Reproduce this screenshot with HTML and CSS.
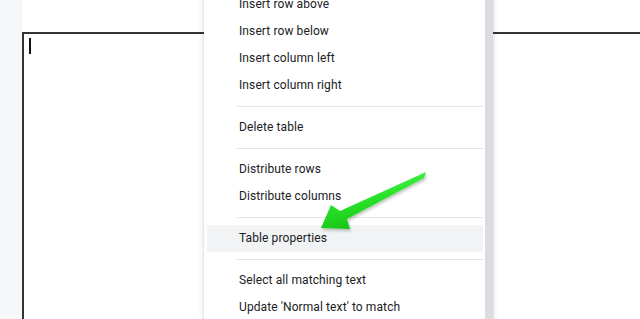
FILE: index.html
```html
<!DOCTYPE html>
<html>
<head>
<meta charset="utf-8">
<link rel="stylesheet" href="styles.css">
</head>
<body>
<div class="app">
  <div class="gutter"></div>
  <div class="page">
    <div class="table">
      <div class="cell"><span class="caret"></span></div>
    </div>
  </div>
</div>

<div class="menu">
  <div class="menu-list">
    <div class="item">Insert row above</div>
    <div class="item">Insert row below</div>
    <div class="item">Insert column left</div>
    <div class="item">Insert column right</div>
    <div class="sep"></div>
    <div class="item">Delete table</div>
    <div class="sep"></div>
    <div class="item">Distribute rows</div>
    <div class="item">Distribute columns</div>
    <div class="sep"></div>
    <div class="item active">Table properties</div>
    <div class="sep"></div>
    <div class="item">Select all matching text</div>
    <div class="item">Update 'Normal text' to match</div>
  </div>
  <div class="track"></div>
</div>

<svg class="arrow" width="640" height="319" viewBox="0 0 640 319">
  <defs>
    <linearGradient id="g" x1="0" y1="0" x2="0.35" y2="1">
      <stop offset="0" stop-color="#5cf25c"/>
      <stop offset="0.5" stop-color="#2ee62e"/>
      <stop offset="1" stop-color="#16c416"/>
    </linearGradient>
    <filter id="sh" x="-20%" y="-20%" width="140%" height="140%">
      <feDropShadow dx="1" dy="2" stdDeviation="1.5" flood-color="#000" flood-opacity="0.25"/>
    </filter>
  </defs>
  <polygon filter="url(#sh)" fill="url(#g)" points="426,172 424,178 347,219 350,229 321,228 331,205 340,211"/>
</svg>
</body>
</html>
```

FILE: styles.css
```css
html, body {
  margin: 0;
  padding: 0;
  width: 640px;
  height: 319px;
  overflow: hidden;
  background: #ffffff;
  font-family: Roboto, "Noto Sans", Arial, sans-serif;
}

.app {
  display: flex;
  width: 640px;
  height: 319px;
}

.gutter {
  width: 22px;
  flex: none;
  background: #f6f7f8;
}

.page {
  flex: 1;
  background: #ffffff;
  padding-top: 32px;
}

.table {
  border-top: 2px solid #333;
  border-left: 2px solid #333;
  height: 300px;
}

.cell {
  padding: 4px 0 0 5px;
}

.caret {
  display: block;
  width: 2px;
  height: 16px;
  background: #111;
}

.menu {
  position: absolute;
  left: 204px;
  top: -9px;
  display: flex;
  background: #ffffff;
  box-shadow: 0 2px 6px rgba(60, 64, 67, 0.18), 0 1px 2px rgba(60, 64, 67, 0.15);
}

.menu-list {
  width: 281px;
  display: flex;
  flex-direction: column;
}

.item {
  height: 27px;
  line-height: 27px;
  margin: 0 2px 0 3px;
  padding-left: 32px;
  font-size: 12px;
  color: #202124;
  letter-spacing: 0.1px;
  white-space: nowrap;
}

.item.active {
  background: #f1f3f4;
}

.sep {
  height: 1px;
  margin: 7px 2px 7px 33px;
  background: #e3e5e8;
}

.track {
  width: 8px;
  background: #dadce0;
}

.arrow {
  position: absolute;
  left: 0;
  top: 0;
}
```
